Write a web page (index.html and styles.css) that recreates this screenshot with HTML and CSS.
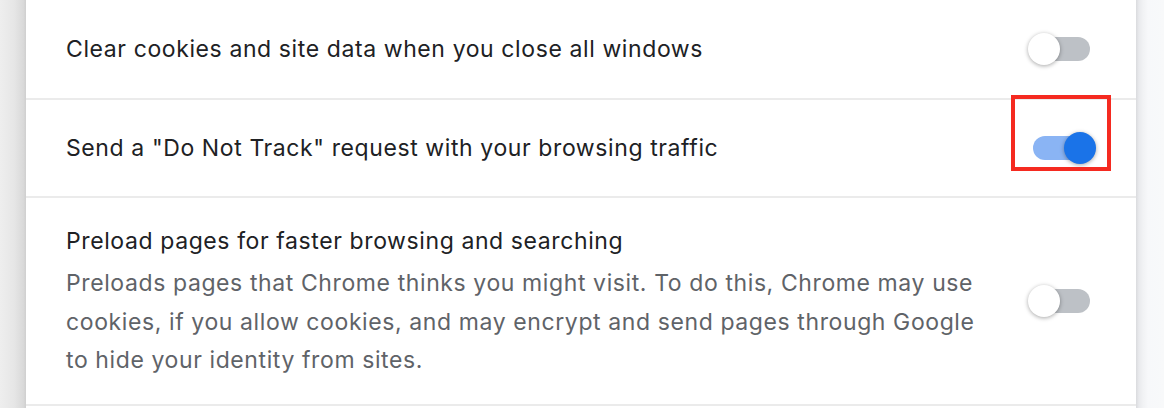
FILE: index.html
```html
<!DOCTYPE html>
<html>
<head>
<meta charset="utf-8">
<link rel="stylesheet" href="styles.css">
</head>
<body>
<div class="page">
  <div class="left-shade"></div>
  <div class="card">
    <div class="row row-first">
      <div class="text">
        <div class="label">Clear cookies and site data when you close all windows</div>
      </div>
      <div class="toggle">
        <div class="track"></div>
        <div class="knob"></div>
      </div>
    </div>
    <div class="row">
      <div class="text">
        <div class="label">Send a "Do Not Track" request with your browsing traffic</div>
      </div>
      <div class="toggle toggle-on">
        <div class="track"></div>
        <div class="knob"></div>
        <div class="highlight"></div>
      </div>
    </div>
    <div class="row row-tall">
      <div class="text">
        <div class="label">Preload pages for faster browsing and searching</div>
        <div class="secondary">Preloads pages that Chrome thinks you might visit. To do this, Chrome may use cookies, if you allow cookies, and may encrypt and send pages through Google to hide your identity from sites.</div>
      </div>
      <div class="toggle">
        <div class="track"></div>
        <div class="knob"></div>
      </div>
    </div>
    <div class="card-bottom"></div>
  </div>
  <div class="right-pane"></div>
</div>
</body>
</html>
```

FILE: styles.css
```css
* { box-sizing: border-box; }
html, body {
  margin: 0;
  padding: 0;
  width: 1164px;
  height: 408px;
  overflow: hidden;
  background: #ffffff;
  font-family: Inter, Roboto, "Liberation Sans", Arial, sans-serif;
}
.page {
  display: flex;
  width: 1164px;
  height: 408px;
}
.left-shade {
  width: 26px;
  flex: 0 0 26px;
  background: linear-gradient(to right, #eeeeee 0%, #e6e6e6 55%, #d9d9d9 90%, #cfcfcf 100%);
}
.card {
  flex: 1 1 auto;
  background: #ffffff;
  display: flex;
  flex-direction: column;
}
.right-pane {
  width: 28px;
  flex: 0 0 28px;
  background: linear-gradient(to right, #dadbde 0px, #e9eaed 3px, #f1f2f4 7px, #f7f8fa 12px, #f8f9fa 100%);
}
.row {
  display: flex;
  align-items: center;
  padding: 0 40px;
  height: 98px;
  border-top: 2px solid #ebebeb;
}
.row-first {
  border-top: none;
  height: 98px;
}
.row-tall {
  height: 208px;
}
.card-bottom {
  height: 2px;
  background: #ebebeb;
}
.text {
  flex: 1 1 auto;
  padding-right: 40px;
}
.label {
  color: #202124;
  font-size: 23px;
  line-height: 38px;
  letter-spacing: 0.6px;
}
.row-tall .label {
  margin-bottom: 4px;
}
.secondary {
  color: #5f6368;
  font-size: 23px;
  line-height: 38.5px;
  letter-spacing: 0.6px;
}
.toggle {
  position: relative;
  flex: 0 0 68px;
  width: 68px;
  height: 32px;
}
.track {
  position: absolute;
  left: 5px;
  top: 4px;
  width: 57px;
  height: 24px;
  border-radius: 12px;
  background: #bdc1c6;
}
.knob {
  position: absolute;
  left: 0;
  top: 0;
  width: 32px;
  height: 32px;
  border-radius: 50%;
  background: #ffffff;
  box-shadow: 0 1px 4px rgba(0, 0, 0, 0.35);
}
.toggle-on .track {
  background: #8ab4f4;
}
.toggle-on .knob {
  left: auto;
  right: 0;
  background: #1a73e8;
}
.highlight {
  position: absolute;
  left: -17px;
  top: -37px;
  width: 100px;
  height: 76px;
  border: 4px solid #f52a20;
}
```
